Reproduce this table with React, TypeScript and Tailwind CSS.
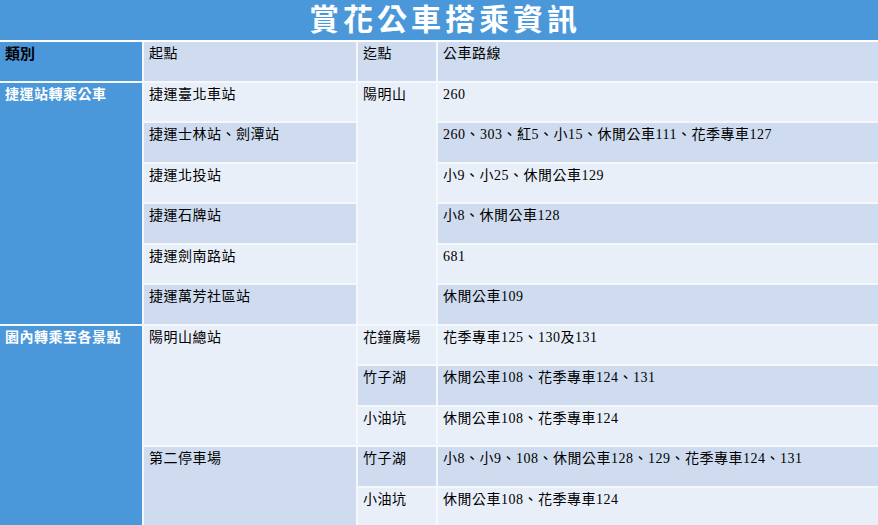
import React from "react";

const font = { fontFamily: '"Liberation Serif", "Noto Sans CJK TC", serif' };

const LIGHT = "bg-[#e9eff8]";
const DARK = "bg-[#cfdcef]";

type Cell = {
  text: string;
  col: string;
  row: string;
  bg: string;
  className?: string;
};

const cells: Cell[] = [
  // header
  { text: "類別", col: "col-start-1", row: "row-start-1", bg: "bg-[#4a97d9]", className: "font-bold text-black text-[15px]" },
  { text: "起點", col: "col-start-2", row: "row-start-1", bg: DARK },
  { text: "迄點", col: "col-start-3", row: "row-start-1", bg: DARK },
  { text: "公車路線", col: "col-start-4", row: "row-start-1", bg: DARK },

  // 捷運站轉乘公車
  { text: "捷運站轉乘公車", col: "col-start-1", row: "row-start-2 row-span-6", bg: "bg-[#4a97d9]", className: "font-bold text-white text-[14px] tracking-[0.5px]" },
  { text: "捷運臺北車站", col: "col-start-2", row: "row-start-2", bg: LIGHT },
  { text: "捷運士林站、劍潭站", col: "col-start-2", row: "row-start-3", bg: DARK },
  { text: "捷運北投站", col: "col-start-2", row: "row-start-4", bg: LIGHT },
  { text: "捷運石牌站", col: "col-start-2", row: "row-start-5", bg: DARK },
  { text: "捷運劍南路站", col: "col-start-2", row: "row-start-6", bg: LIGHT },
  { text: "捷運萬芳社區站", col: "col-start-2", row: "row-start-7", bg: DARK },
  { text: "陽明山", col: "col-start-3", row: "row-start-2 row-span-6", bg: LIGHT },
  { text: "260", col: "col-start-4", row: "row-start-2", bg: LIGHT },
  { text: "260、303、紅5、小15、休閒公車111、花季專車127", col: "col-start-4", row: "row-start-3", bg: DARK },
  { text: "小9、小25、休閒公車129", col: "col-start-4", row: "row-start-4", bg: LIGHT },
  { text: "小8、休閒公車128", col: "col-start-4", row: "row-start-5", bg: DARK },
  { text: "681", col: "col-start-4", row: "row-start-6", bg: LIGHT },
  { text: "休閒公車109", col: "col-start-4", row: "row-start-7", bg: DARK },

  // 園內轉乘至各景點
  { text: "園內轉乘至各景點", col: "col-start-1", row: "row-start-8 row-span-5", bg: "bg-[#4a97d9]", className: "font-bold text-white text-[14px] tracking-[0.5px]" },
  { text: "陽明山總站", col: "col-start-2", row: "row-start-8 row-span-3", bg: LIGHT },
  { text: "第二停車場", col: "col-start-2", row: "row-start-11 row-span-2", bg: DARK },
  { text: "花鐘廣場", col: "col-start-3", row: "row-start-8", bg: LIGHT },
  { text: "竹子湖", col: "col-start-3", row: "row-start-9", bg: DARK },
  { text: "小油坑", col: "col-start-3", row: "row-start-10", bg: LIGHT },
  { text: "竹子湖", col: "col-start-3", row: "row-start-11", bg: DARK },
  { text: "小油坑", col: "col-start-3", row: "row-start-12", bg: LIGHT },
  { text: "花季專車125、130及131", col: "col-start-4", row: "row-start-8", bg: LIGHT },
  { text: "休閒公車108、花季專車124、131", col: "col-start-4", row: "row-start-9", bg: DARK },
  { text: "休閒公車108、花季專車124", col: "col-start-4", row: "row-start-10", bg: LIGHT },
  { text: "小8、小9、108、休閒公車128、129、花季專車124、131", col: "col-start-4", row: "row-start-11", bg: DARK },
  { text: "休閒公車108、花季專車124", col: "col-start-4", row: "row-start-12", bg: LIGHT },
];

export default function App() {
  return (
    <div className="w-[878px] h-[525px] overflow-hidden bg-white" style={font}>
      {/* 標題 */}
      <div className="h-[40px] bg-[#4a97d9] flex items-center justify-center pl-[12px]">
        <h1 className="text-white text-[30px] font-semibold tracking-[4px] leading-none">
          賞花公車搭乘資訊
        </h1>
      </div>

      {/* 表格 */}
      <div className="mt-[2px] grid grid-cols-[142px_212px_78px_1fr] auto-rows-[38.5px] gap-x-[2px] gap-y-[2px] bg-[#f4f7fb]">
        {cells.map((c, i) => (
          <div
            key={i}
            className={`${c.col} ${c.row} ${c.bg} px-[5px] pt-[1px] whitespace-nowrap ${
              c.className ?? "text-black text-[14px] tracking-[0.5px]"
            }`}
          >
            {c.text}
          </div>
        ))}
      </div>
    </div>
  );
}
